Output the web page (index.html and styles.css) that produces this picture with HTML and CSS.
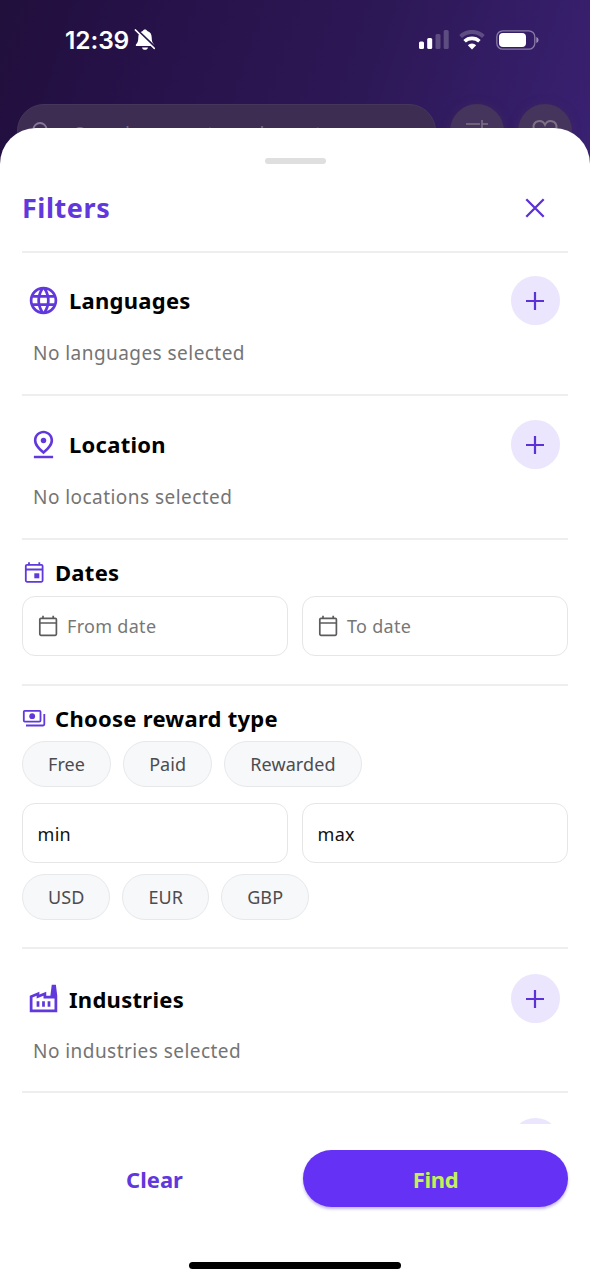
FILE: index.html
```html
<!DOCTYPE html>
<html lang="en">
<head>
<meta charset="utf-8">
<title>Filters</title>
<link rel="stylesheet" href="styles.css">
</head>
<body>
<div class="screen">
  <header class="hero">
    <div class="status">
      <span class="clock">12:39</span>
      <svg class="bell" width="22" height="24" viewBox="0 0 22 24" fill="#fff">
        <path d="M11 1.500c-1.100 0-2 .7-2.300 1.600C5.800 4 4.300 6.300 4.300 9.500c0 4-.9 5.500-2.300 7-.5.600-.2 1.600.8 1.600h16.400c1 0 1.300-1 .8-1.600-1.400-1.500-2.300-3-2.300-7 0-3.200-1.500-5.500-4.400-6.400C13 2.200 12.100 1.500 11 1.500zM8 19.500h6c-.3 1.400-1.500 2.300-3 2.300s-2.700-.9-3-2.300z"/>
        <path d="M2.200 1.400 21.500 19.700" stroke="#26124a" stroke-width="2.600"/>
        <path d="M1.300 1.900 20.300 20.400" stroke="#fff" stroke-width="1.500" stroke-linecap="round"/>
      </svg>
      <span class="spacer"></span>
      <svg class="signal" width="31" height="19" viewBox="0 0 31 19" fill="#fff">
        <rect x="0" y="11.500" width="5" height="7.500" rx="1.500"/>
        <rect x="8.200" y="8" width="5" height="11" rx="1.500"/>
        <rect x="16.500" y="4" width="5" height="15" rx="1.500" opacity=".22"/>
        <rect x="24.700" y="0" width="5" height="19" rx="1.500" opacity=".22"/>
      </svg>
      <svg class="wifi" width="26" height="20" viewBox="0 0 26 20" fill="none" stroke="#fff">
        <path d="M1.600 6.500a16.500 16.500 0 0 1 22.800 0" stroke-width="4" opacity=".22"/>
        <path d="M5.600 11.300a10.800 10.800 0 0 1 14.800 0" stroke-width="3.600"/>
        <path d="M13 19.500 8.800 15.200a6 6 0 0 1 8.400 0z" fill="#fff" stroke="none"/>
      </svg>
      <svg class="battery" width="43" height="20" viewBox="0 0 43 20">
        <rect x=".8" y=".8" width="38" height="18.400" rx="6" fill="none" stroke="#fff" stroke-opacity=".42" stroke-width="1.300"/>
        <rect x="3" y="3" width="27" height="14" rx="4" fill="#fff"/>
        <path d="M40.300 7c1.500.500 2.200 1.700 2.200 3s-.7 2.500-2.200 3z" fill="#fff" opacity=".5"/>
      </svg>
    </div>
    <div class="search-row">
      <div class="search">
        <svg width="26" height="26" viewBox="0 0 26 26" fill="none" stroke="#867797" stroke-width="1.800"><circle cx="10" cy="9.500" r="6.500"/><path d="m15 14.500 7 7"/></svg>
        <span>Search requests and events</span>
      </div>
      <div class="round">
        <svg width="24" height="24" viewBox="0 0 24 24" fill="none" stroke="#7d7182" stroke-width="1.600"><path d="M1 5h14M17 1v8M17 5h6M1 13h4M8 9v8M8 13h15"/></svg>
      </div>
      <div class="round">
        <svg width="28" height="26" viewBox="0 0 28 26" fill="none" stroke="#7d7182" stroke-width="2"><path d="M14 23.500C6 17 2.500 13 2.500 8.300c0-7 8.500-8.300 11.500-2.500 3-5.800 11.500-4.500 11.500 2.500 0 4.700-3.500 8.700-11.500 15.200z"/></svg>
      </div>
    </div>
  </header>

  <main class="sheet">
    <div class="handle"></div>
    <div class="head">
      <h1>Filters</h1>
      <svg width="20" height="20" viewBox="0 0 20 20" fill="none" stroke="#5a32d6" stroke-width="2.300"><path d="M1.300 1.300 18.700 18.700M18.700 1.300 1.300 18.700"/></svg>
    </div>

    <div class="content">
      <section class="pick first">
        <div class="row">
          <svg class="mark" viewBox="0 0 24 24"><path d="M11.990 2C6.470 2 2 6.480 2 12s4.470 10 9.990 10C17.520 22 22 17.520 22 12S17.520 2 11.990 2zm6.930 6h-2.950c-.32-1.250-.78-2.450-1.380-3.560 1.840.63 3.370 1.910 4.330 3.560zM12 4.040c.83 1.200 1.480 2.530 1.910 3.960h-3.820c.43-1.430 1.080-2.760 1.910-3.960zM4.260 14C4.100 13.360 4 12.690 4 12s.1-1.360.26-2h3.380c-.08.66-.14 1.320-.14 2s.06 1.340.14 2H4.260zm.82 2h2.950c.32 1.250.78 2.450 1.380 3.560-1.840-.63-3.370-1.900-4.330-3.560zm2.950-8H5.080c.96-1.660 2.490-2.930 4.330-3.560C8.810 5.550 8.350 6.750 8.030 8zM12 19.960c-.83-1.200-1.480-2.530-1.910-3.960h3.820c-.43 1.430-1.080 2.760-1.910 3.960zM14.340 14H9.660c-.09-.66-.16-1.320-.16-2s.07-1.350.16-2h4.680c.09.65.16 1.320.16 2s-.07 1.340-.16 2zm.25 5.560c.6-1.110 1.060-2.310 1.380-3.560h2.950c-.96 1.650-2.490 2.930-4.330 3.560zM16.360 14c.08-.66.14-1.320.14-2s-.06-1.340-.14-2h3.380c.16.64.26 1.310.26 2s-.1 1.360-.26 2h-3.380z"/></svg>
          <h2>Languages</h2>
          <button class="add" aria-label="Add language"><svg viewBox="0 0 20 20"><path d="M10 1v18M1 10h18"/></svg></button>
        </div>
        <p>No languages selected</p>
      </section>

      <section class="pick">
        <div class="row">
          <svg class="mark" viewBox="0 0 24 24"><path fill-rule="evenodd" d="M12 2C8.730 2 5 4.460 5 9.150 5 12.270 7.330 15.560 12 19c4.670-3.440 7-6.730 7-9.850C19 4.460 15.270 2 12 2zm0 1.900c2.400 0 5.100 1.700 5.100 5.250 0 2.160-1.820 4.670-5.100 7.420-3.280-2.750-5.100-5.260-5.100-7.420C6.900 5.600 9.600 3.900 12 3.900z"/><circle cx="12" cy="9" r="2"/><path d="M5 20.200h14V22H5z"/></svg>
          <h2>Location</h2>
          <button class="add" aria-label="Add location"><svg viewBox="0 0 20 20"><path d="M10 1v18M1 10h18"/></svg></button>
        </div>
        <p>No locations selected</p>
      </section>

      <section class="dates">
        <div class="title">
          <svg width="24" height="24" viewBox="0 0 24 24" fill="none" stroke="#6138dc" stroke-width="1.800"><rect x="3.800" y="3.800" width="16.800" height="17" rx="1.200"/><path d="M4 8.500h16.500M7 1.300v3M17.300 1.300v3"/><path d="M12.300 12.300h5v5h-5z" fill="#6138dc" stroke="none"/></svg>
          <h2>Dates</h2>
        </div>
        <div class="pair">
          <div class="field"><svg class="cal" viewBox="0 0 20 22"><rect x="1.800" y="3.300" width="16.600" height="17" rx="1.200"/><path d="M2 8h16.300M5 .8v3M15.200 .8v3"/></svg><span>From date</span></div>
          <div class="field"><svg class="cal" viewBox="0 0 20 22"><rect x="1.800" y="3.300" width="16.600" height="17" rx="1.200"/><path d="M2 8h16.300M5 .8v3M15.200 .8v3"/></svg><span>To date</span></div>
        </div>
      </section>

      <section class="reward">
        <div class="title">
          <svg width="24" height="24" viewBox="0 0 24 24" fill="none" stroke="#6138dc" stroke-width="1.800"><rect x="1.800" y="3.800" width="16.700" height="10.800" rx="1"/><path d="M22.300 7v10.300a1.200 1.200 0 0 1-1.200 1.200H4"/><circle cx="10.200" cy="9.200" r="2.900" fill="#6138dc" stroke="none"/></svg>
          <h2>Choose reward type</h2>
        </div>
        <div class="chips"><span class="chip">Free</span><span class="chip">Paid</span><span class="chip">Rewarded</span></div>
        <div class="pair money">
          <div class="field dark"><span>min</span></div>
          <div class="field dark"><span>max</span></div>
        </div>
        <div class="chips"><span class="chip">USD</span><span class="chip">EUR</span><span class="chip">GBP</span></div>
      </section>

      <section class="pick last">
        <div class="row">
          <svg class="mark" viewBox="0 0 24 24"><path d="M22 22H2V10l7-3v2l5-2v3h3l1-8h3l1 8v12zM12 9.950l-5 2V10l-3 1.320V20h16v-8h-8V9.950zM11 18h2v-4h-2v4zm-4 0h2v-4H7v4zm10-4h-2v4h2v-4z"/></svg>
          <h2>Industries</h2>
          <button class="add" aria-label="Add industry"><svg viewBox="0 0 20 20"><path d="M10 1v18M1 10h18"/></svg></button>
        </div>
        <p>No industries selected</p>
      </section>

      <section class="pick last">
        <div class="row">
          <button class="add" aria-label="Add"></button>
        </div>
      </section>
    </div>

    <footer class="actions">
      <button class="clear">Clear</button>
      <button class="find">Find</button>
    </footer>
    <div class="home"></div>
  </main>
</div>
</body>
</html>
```
FILE: styles.css
```css
* { box-sizing: border-box; }
body { margin: 0; font-family: "Noto Sans", sans-serif; }
h1, h2, p { margin: 0; }
button { border: 0; padding: 0; font-family: inherit; background: none; }
svg { display: block; flex: none; }

.screen {
  width: 590px;
  height: 1280px;
  overflow: hidden;
  background: linear-gradient(108deg, #210f3c 0, #27124a 170px, #2d1856 370px, #3a2173 620px);
}

.hero { height: 184px; }
.status {
  display: flex;
  align-items: center;
  height: 104px;
  padding: 0 51px 25px 65px;
}
.clock {
  font: 600 24.5px/30px Inter, sans-serif;
  letter-spacing: -.1px;
  color: #fff;
}
.bell { margin-left: 5px; }
.spacer { flex: 1; }
.wifi { margin: 0 11px 0 9px; }

.search-row { display: flex; gap: 14px; padding: 0 17px; }
.search {
  display: flex;
  flex: none;
  width: 419px;
  height: 54px;
  padding: 15px 12px 0;
  gap: 18px;
  border-radius: 27px;
  background: #3e2d52;
  border: 1px solid #46365a;
  color: #776a85;
  font-size: 19px;
  line-height: 28px;
  letter-spacing: .5px;
  white-space: nowrap;
}
.round {
  display: flex;
  justify-content: center;
  flex: none;
  width: 54px;
  height: 54px;
  padding-top: 15px;
  border-radius: 50%;
  background: #45345c;
  box-shadow: 0 0 8px rgba(70, 45, 90, .5);
}

.sheet {
  display: flex;
  flex-direction: column;
  position: relative;
  height: 1152px;
  margin-top: -56px;
  padding: 30px 22px 0;
  background: #fff;
  border-radius: 36px 36px 0 0;
}
.handle { align-self: center; width: 61px; height: 6px; border-radius: 3px; background: #dfdfdf; }
.head {
  display: flex;
  align-items: center;
  justify-content: space-between;
  height: 87px;
  padding: 0 23px 0 0;
}
h1 { font-size: 27px; font-weight: 700; line-height: 36px; letter-spacing: .55px; color: #6138dc; }

.content { height: 873px; overflow: hidden; }
section { border-top: 2px solid #eeeeee; }
.pick { height: 144px; padding: 24px 8.5px 0 5px; }
.pick.first { height: 143px; padding-top: 23px; }
.pick.last { padding-top: 25px; }
.row { display: flex; align-items: center; height: 49px; }
.mark { width: 33px; height: 33px; fill: #6138dc; }
h2 { font-size: 22px; font-weight: 700; line-height: 30px; letter-spacing: .27px; color: #000; }
.row h2 { margin-left: 9px; }
.pick:not(.last) h2 { margin-top: -1px; }
.add {
  display: flex;
  align-items: center;
  justify-content: center;
  width: 49px;
  height: 49px;
  margin-left: auto;
  border-radius: 50%;
  background: #ebe5fd;
}
.add svg { width: 20px; height: 20px; fill: none; stroke: #5a32d6; stroke-width: 2.200; }
.pick p { margin: 14px 0 0 6px; font-size: 19px; line-height: 28px; letter-spacing: .45px; color: #747474; }

.title { display: flex; align-items: center; gap: 9px; height: 30px; }
.title h2 { margin-top: -2px; }
.dates { height: 146px; padding-top: 18px; }
.reward { height: 263px; padding-top: 18px; }
.pair { display: grid; grid-template-columns: 1fr 1fr; gap: 14px; margin-top: 8px; }
.field {
  display: flex;
  align-items: center;
  height: 60px;
  padding-left: 15px;
  gap: 9px;
  border: 1px solid #e6e6e6;
  border-radius: 13px;
  font-size: 18px;
  line-height: 26px;
  letter-spacing: .3px;
  color: #777;
}
.cal { width: 20px; height: 22px; fill: none; stroke: #5c5c5c; stroke-width: 1.700; }
.dark { color: #111; padding-top: 2px; padding-left: 14.5px; }
.chips { display: flex; gap: 12px; margin-top: 7px; }
.chip {
  height: 46px;
  padding: 0 25px;
  border: 1px solid #e6e8ea;
  border-radius: 23px;
  background: #f7f8fa;
  font-size: 18px;
  line-height: 44px;
  letter-spacing: .1px;
  color: #4c4c4f;
}
.money { margin-top: 16px; margin-bottom: 11px; }

.actions { display: grid; grid-template-columns: 1fr 265px; gap: 16px; margin-top: 26px; height: 57px; }
.actions button { font-size: 22px; font-weight: 700; line-height: 30px; }
.actions .clear { color: #6138dc; }
.find {
  border-radius: 29px;
  background: #6431f5;
  color: #c3f05c;
  box-shadow: 0 2px 3px rgba(80, 50, 180, .35);
}
.actions .find { letter-spacing: -.3px; }
.home { align-self: center; width: 212px; height: 7px; margin-top: 55px; border-radius: 4px; background: #000; }
```
